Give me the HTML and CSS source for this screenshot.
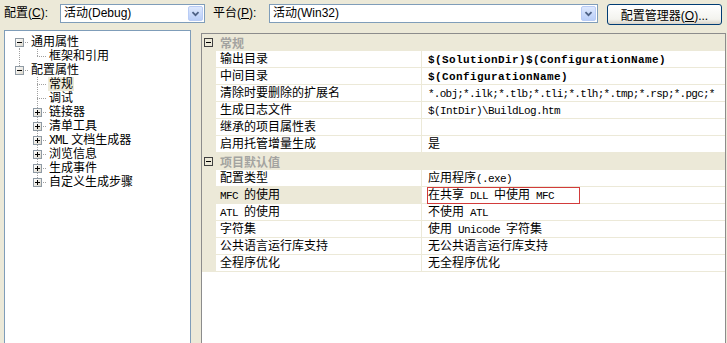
FILE: index.html
```html
<!DOCTYPE html>
<html>
<head>
<meta charset="utf-8">
<title>属性页</title>
<link rel="stylesheet" href="styles.css">
</head>
<body>
<div class="toolbar">
	<span class="lbl">配置(<u>C</u>):</span>
	<div class="combo combo-cfg">
		<span class="val">活动(Debug)</span>
		<span class="drop"><svg width="15" height="15" viewBox="0 0 15 15"><path d="M4 6 L7.5 9.5 L11 6" fill="none" stroke="#4D6185" stroke-width="2"/></svg></span>
	</div>
	<span class="lbl lbl-plat">平台(<u>P</u>):</span>
	<div class="combo combo-plat">
		<span class="val">活动(Win32)</span>
		<span class="drop"><svg width="15" height="15" viewBox="0 0 15 15"><path d="M4 6 L7.5 9.5 L11 6" fill="none" stroke="#4D6185" stroke-width="2"/></svg></span>
	</div>
	<button class="btn">配置管理器(<u>O</u>)...</button>
</div>

<div class="main">
	<div class="tree">
		<div class="node root first"><span class="exp minus"></span><span class="txt">通用属性</span></div>
		<div class="node child lastchild thru"><span class="txt">框架和引用</span></div>
		<div class="node root last"><span class="exp minus"></span><span class="txt">配置属性</span></div>
		<div class="node child"><span class="txt sel">常规</span></div>
		<div class="node child"><span class="txt">调试</span></div>
		<div class="node child"><span class="exp plus"></span><span class="txt">链接器</span></div>
		<div class="node child"><span class="exp plus"></span><span class="txt">清单工具</span></div>
		<div class="node child"><span class="exp plus"></span><span class="txt"><span class="en">XML</span> 文档生成器</span></div>
		<div class="node child"><span class="exp plus"></span><span class="txt">浏览信息</span></div>
		<div class="node child"><span class="exp plus"></span><span class="txt">生成事件</span></div>
		<div class="node child lastchild"><span class="exp plus"></span><span class="txt">自定义生成步骤</span></div>
	</div>

	<div class="pg">
		<div class="cat"><span class="box"></span><span>常规</span></div>
		<div class="prop"><span class="gut"></span><span class="name">输出目录</span><span class="value"><span class="en b">$(SolutionDir)$(ConfigurationName)</span></span></div>
		<div class="prop"><span class="gut"></span><span class="name">中间目录</span><span class="value"><span class="en b">$(ConfigurationName)</span></span></div>
		<div class="prop"><span class="gut"></span><span class="name">清除时要删除的扩展名</span><span class="value"><span class="en tight">*.obj;*.ilk;*.tlb;*.tli;*.tlh;*.tmp;*.rsp;*.pgc;*</span></span></div>
		<div class="prop"><span class="gut"></span><span class="name">生成日志文件</span><span class="value"><span class="en">$(IntDir)\BuildLog.htm</span></span></div>
		<div class="prop"><span class="gut"></span><span class="name">继承的项目属性表</span><span class="value"></span></div>
		<div class="prop"><span class="gut"></span><span class="name">启用托管增量生成</span><span class="value">是</span></div>
		<div class="cat"><span class="box"></span><span>项目默认值</span></div>
		<div class="prop"><span class="gut"></span><span class="name">配置类型</span><span class="value">应用程序<span class="en">(.exe)</span></span></div>
		<div class="prop"><span class="gut"></span><span class="name selected"><span class="en">MFC </span>的使用</span><span class="value mark">在共享<span class="en"> DLL </span>中使用<span class="en"> MFC</span></span></div>
		<div class="prop"><span class="gut"></span><span class="name"><span class="en">ATL </span>的使用</span><span class="value">不使用<span class="en"> ATL</span></span></div>
		<div class="prop"><span class="gut"></span><span class="name">字符集</span><span class="value">使用<span class="en"> Unicode </span>字符集</span></div>
		<div class="prop"><span class="gut"></span><span class="name">公共语言运行库支持</span><span class="value">无公共语言运行库支持</span></div>
		<div class="prop"><span class="gut"></span><span class="name">全程序优化</span><span class="value">无全程序优化</span></div>
	</div>
</div>
</body>
</html>
```

FILE: styles.css
```css
*{
	margin: 0;
	padding: 0;
}
body{
	background-color: #ECE9D8;
	font: 12px "Liberation Sans", "Noto Sans CJK SC", sans-serif;
	color: #000;
	overflow: hidden;
}
u{
	text-decoration: underline;
}
.en{
	font-family: "Liberation Mono", "Noto Sans CJK SC", monospace;
	font-size: 11px;
	letter-spacing: -0.6px;
}
.en.b{
	font-weight: bold;
	letter-spacing: 0.4px;
}
.en.tight{
	letter-spacing: -0.75px;
}

/* top bar */
.toolbar{
	display: flex;
	align-items: flex-start;
	height: 30px;
	padding: 4px 0 0 4px;
	box-sizing: border-box;
}
.lbl{
	width: 56px;
	line-height: 19px;
	white-space: nowrap;
}
.lbl-plat{
	margin-left: 8px;
}
.combo{
	display: flex;
	height: 19px;
	box-sizing: border-box;
	border: 1px solid #7F9DB9;
	background-color: #fff;
}
.combo-cfg{
	width: 145px;
}
.combo-plat{
	width: 329px;
}
.combo .val{
	flex: 1;
	padding-left: 3px;
	line-height: 17px;
	white-space: nowrap;
}
.drop{
	width: 15px;
	height: 15px;
	margin: 1px;
	border: 1px solid #B9CCF5;
	border-radius: 2px;
	box-sizing: border-box;
	background: linear-gradient(#DDE8FD, #B9CEF8);
	display: flex;
	align-items: center;
	justify-content: center;
}
.drop svg{
	width: 13px;
	height: 13px;
}
.btn{
	margin-left: 9px;
	width: 115px;
	height: 21px;
	border: 1px solid #003C74;
	border-radius: 3px;
	background: linear-gradient(#FFFFFF, #F3F3EE 75%, #D8D3C8);
	font: 12px "Liberation Sans", "Noto Sans CJK SC", sans-serif;
	color: #000;
}

/* main area */
.main{
	display: flex;
	align-items: flex-start;
}
.tree{
	margin-left: 4px;
	width: 187px;
	height: 320px;
	box-sizing: border-box;
	border: 1px solid #7F9DB9;
	background-color: #fff;
	padding-top: 4px;
	--dv: repeating-linear-gradient(to bottom, #A0A0A0 0 1px, transparent 1px 2px);
	--dh: repeating-linear-gradient(to right, #A0A0A0 0 1px, transparent 1px 2px);
}
.node{
	display: flex;
	align-items: center;
	height: 14px;
	line-height: 14px;
	white-space: nowrap;
	background-repeat: no-repeat;
}
.node .en{
	font-size: 12px;
	letter-spacing: -0.9px;
}
.root{
	padding-left: 10px;
	background-image: var(--dv), var(--dh);
	background-size: 1px 7px, 10px 1px;
}
.root.first{
	background-position: 14px 7px, 14px 7px;
}
.root.last{
	background-position: 14px 0, 14px 7px;
}
.root .exp{
	margin-right: 6px;
}
.child{
	padding-left: 43px;
	background-image: var(--dv), var(--dh);
	background-size: 1px 14px, 9px 1px;
	background-position: 32px 0, 32px 7px;
}
.child.lastchild{
	background-size: 1px 7px, 9px 1px;
}
.child.thru{
	background-image: var(--dv), var(--dv), var(--dh);
	background-size: 1px 14px, 1px 7px, 9px 1px;
	background-position: 14px 0, 32px 0, 32px 7px;
}
.child .exp{
	margin-left: -15px;
	margin-right: 6px;
}
.exp{
	position: relative;
	width: 9px;
	height: 9px;
	box-sizing: border-box;
	border: 1px solid #8F9AA4;
	background: linear-gradient(135deg, #FFFFFF, #DCD8CC);
}
.exp::before, .box::before{
	content: "";
	position: absolute;
	left: 1px;
	top: 3px;
	width: 5px;
	height: 1px;
	background-color: #000;
}
.exp.plus::after{
	content: "";
	position: absolute;
	left: 3px;
	top: 1px;
	width: 1px;
	height: 5px;
	background-color: #000;
}
.txt{
	padding: 0 1px;
}
.txt.sel{
	background-color: #ECE9D8;
}

/* property grid */
.pg{
	margin: 3px 0 0 10px;
	width: 525px;
	height: 320px;
	box-sizing: border-box;
	border: 1px solid #8C8C8C;
	background-color: #fff;
}
.cat{
	display: flex;
	align-items: center;
	height: 17px;
	padding-left: 2px;
	background-color: #ECE9D8;
	color: #A3A3A0;
	font-weight: bold;
}
.box{
	position: relative;
	width: 9px;
	height: 9px;
	box-sizing: border-box;
	border: 1px solid #404040;
	margin-right: 7px;
}
.prop{
	display: flex;
	height: 17px;
	line-height: 16px;
	white-space: nowrap;
}
.gut{
	width: 14px;
	background-color: #ECE9D8;
}
.name{
	width: 206px;
	box-sizing: border-box;
	padding-left: 4px;
	border-right: 1px solid #ECE9D8;
	border-bottom: 1px solid #ECE9D8;
}
.name.selected{
	background-color: #ECE9D8;
}
.value{
	flex: 1;
	padding-left: 6px;
	border-bottom: 1px solid #ECE9D8;
	overflow: hidden;
}
.value.mark{
	position: relative;
	overflow: visible;
}
.value.mark::after{
	content: "";
	position: absolute;
	left: 5px;
	top: 0;
	width: 153px;
	height: 17px;
	box-sizing: border-box;
	border: 1px solid #D23B3B;
}
```
